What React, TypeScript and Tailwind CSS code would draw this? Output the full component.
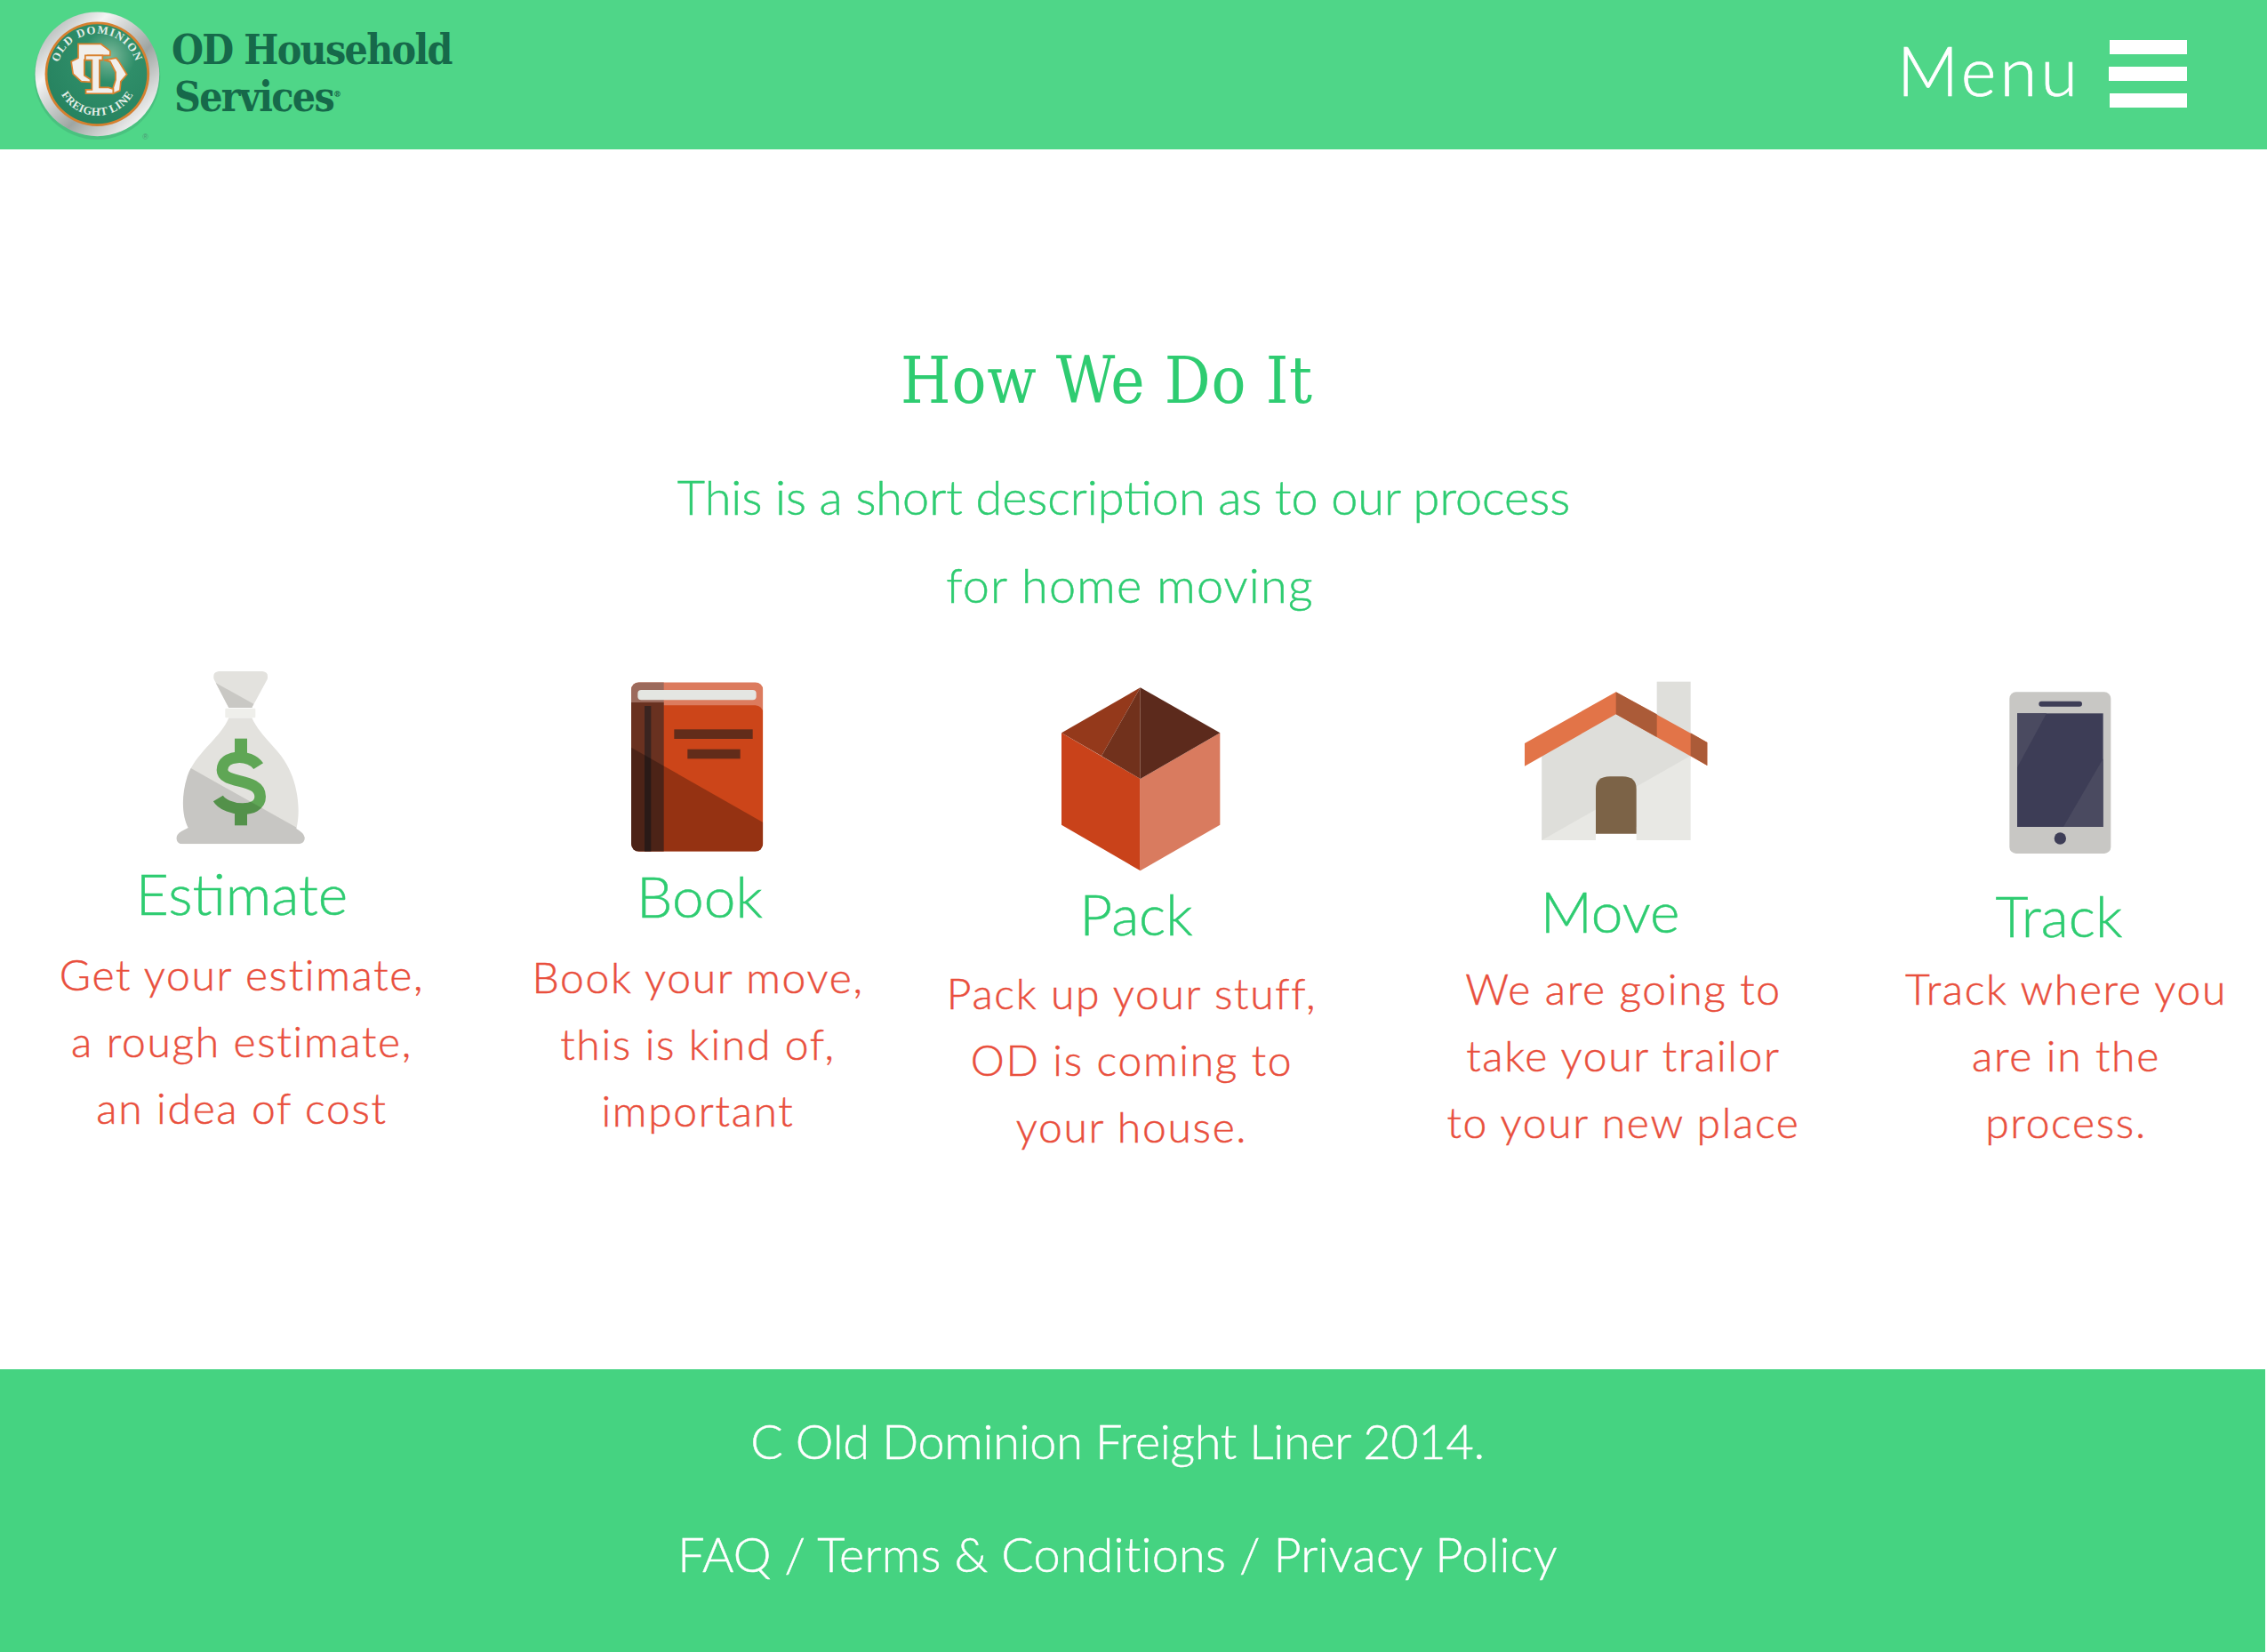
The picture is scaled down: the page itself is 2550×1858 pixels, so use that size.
import { ReactNode } from "react";

const gothic = "font-['Lato','Open_Sans',sans-serif] font-light";

function Logo() {
  return (
    <svg width="187" height="173" viewBox="0 0 168 156" className="-ml-[3px] mb-[8px] shrink-0">
      <defs>
        <linearGradient id="ring" x1="0" y1="0" x2="1" y2="1">
          <stop offset="0" stopColor="#8f9794" />
          <stop offset="0.3" stopColor="#f4f4f4" />
          <stop offset="0.6" stopColor="#9ea5a2" />
          <stop offset="0.85" stopColor="#eeeeee" />
          <stop offset="1" stopColor="#858c89" />
        </linearGradient>
        <radialGradient id="disc" cx="0.62" cy="0.32" r="0.75">
          <stop offset="0" stopColor="#7db99b" />
          <stop offset="0.35" stopColor="#2f8e69" />
          <stop offset="1" stopColor="#26825f" />
        </radialGradient>
        <path id="arcTop" d="M 60 80.5 A 41 41 0 0 1 142 80.5" />
        <path id="arcBottom" d="M 59 80.5 A 42 42 0 0 0 143 80.5" />
      </defs>
      <circle cx="101" cy="83" r="64" fill="#3f9f70" opacity="0.35" />
      <circle cx="101" cy="80.5" r="63" fill="url(#ring)" />
      <circle cx="101" cy="80.5" r="53" fill="#d5802f" />
      <circle cx="101" cy="80.5" r="50.5" fill="url(#disc)" />
      <text fill="#e6efe9" fontFamily="'Liberation Serif', serif" fontWeight="700" fontSize="11.5" letterSpacing="1.2">
        <textPath href="#arcTop" startOffset="50%" textAnchor="middle">OLD DOMINION</textPath>
      </text>
      <text fill="#e6efe9" fontFamily="'Liberation Serif', serif" fontWeight="700" fontSize="11.5" letterSpacing="0.4">
        <textPath href="#arcBottom" startOffset="50%" textAnchor="middle">FREIGHT LINE</textPath>
      </text>
      <g transform="translate(55.5 27.8) scale(0.3086)" stroke="#d9822f" strokeWidth="5" fill="#f1efec">
        <path d="M62 130 L85 118 L85 72 L160 72 L190 95 L190 110 L115 110 L105 125 L105 175 L125 188 L125 197 L95 195 L68 170 Z" />
        <path d="M170 125 L210 118 L218 128 L245 172 L225 195 L222 225 L200 235 L200 215 L208 190 L208 165 L190 130 Z" />
        <path d="M108 110 L165 110 L165 125 L155 125 L155 215 L185 215 L200 220 L200 235 L110 235 L110 222 L130 222 L130 125 L108 125 Z" />
      </g>
      <text x="147" y="147" fontSize="8" fill="#4d9a76" fontFamily="'Liberation Sans', sans-serif">®</text>
    </svg>
  );
}

function BagIcon() {
  return (
    <svg width="200" height="220" viewBox="0 0 600 660">
      <defs>
        <clipPath id="bagBody">
          <path d="M262 202 C 235 270 150 320 122 400 C 100 470 105 535 125 573 L 102 585 Q 85 595 85 610 Q 88 628 106 628 L 498 628 Q 520 625 518 605 Q 515 590 490 576 C 505 520 495 440 470 385 C 440 310 370 270 340 202 Z" />
        </clipPath>
      </defs>
      <path d="M228 45 L376 45 Q 398 48 392 72 L340 168 L262 168 L212 72 Q 206 48 228 45 Z" fill="#e3e2de" />
      <path d="M218 84 L346 155 L340 168 L262 168 Z" fill="#c9c8c4" />
      <rect x="250" y="170" width="102" height="32" rx="3" fill="#efefeb" />
      <rect x="60" y="190" width="480" height="450" fill="#e3e2de" clipPath="url(#bagBody)" />
      <path
        d="M362 365 C 335 322 240 325 240 378 C 240 428 368 402 368 468 C 368 528 250 515 226 474"
        fill="none"
        stroke="#5fa655"
        strokeWidth="38"
      />
      <rect x="282" y="272" width="42" height="52" fill="#5fa655" />
      <rect x="282" y="512" width="42" height="53" fill="#5fa655" />
      <polygon points="60,330 540,600 540,640 60,640" fill="#000" opacity="0.12" clipPath="url(#bagBody)" />
    </svg>
  );
}

function BookIcon() {
  return (
    <svg width="200" height="220" viewBox="0 0 600 660">
      <defs>
        <clipPath id="bookClip">
          <rect x="60" y="52" width="445" height="571" rx="26" />
        </clipPath>
      </defs>
      <g clipPath="url(#bookClip)">
        <rect x="60" y="52" width="445" height="100" fill="#dc7b5e" />
        <rect x="60" y="52" width="110" height="100" fill="#9c6a5c" />
        <rect x="60" y="130" width="445" height="493" rx="26" fill="#cc4519" />
        <rect x="60" y="120" width="110" height="503" fill="#693120" />
        <rect x="105" y="132" width="22" height="491" fill="#3a2420" />
        <polygon points="60,272 505,525 505,623 60,623" fill="#000" opacity="0.27" />
      </g>
      <rect x="82" y="78" width="400" height="34" rx="12" fill="#e4e6e2" />
      <rect x="205" y="211" width="265" height="32" fill="#622c1a" />
      <rect x="250" y="278" width="178" height="32" fill="#622c1a" />
    </svg>
  );
}

function BoxIcon() {
  return (
    <svg width="220" height="230" viewBox="0 0 660 690">
      <polygon points="72,193 338,348 338,658 72,503" fill="#c9421a" />
      <polygon points="338,348 607,193 607,503 338,658" fill="#d97b5f" />
      <polygon points="338,40 72,193 207,271" fill="#94391b" />
      <polygon points="338,40 207,271 338,348" fill="#71311c" />
      <polygon points="338,40 607,193 338,348" fill="#5c2a1c" />
    </svg>
  );
}

function HouseIcon() {
  return (
    <svg width="240" height="210" viewBox="0 0 720 630">
      <rect x="518" y="50" width="114" height="260" fill="#dfdfdb" />
      <polygon points="130,300 380,150 632,300 632,585 130,585" fill="#e8e8e4" />
      <polygon points="130,300 380,150 632,300 130,585" fill="#dededa" />
      <rect x="312" y="540" width="137" height="45" fill="#fff" />
      <path d="M312 563 L312 412 Q 312 370 360 370 L 402 370 Q 449 370 449 412 L449 563 Z" fill="#7c6347" />
      <polygon points="72,258 380,85 688,255 688,333 380,160 72,335" fill="#e27448" />
      <polygon points="380,85 518,160 518,237 380,160" fill="#ab5b38" />
      <polygon points="632,223 688,255 688,333 632,300" fill="#ab5b38" />
    </svg>
  );
}

function PhoneIcon() {
  return (
    <svg width="170" height="210" viewBox="0 0 510 630">
      <rect x="88" y="55" width="342" height="545" rx="22" fill="#c8c7c4" />
      <rect x="187" y="86" width="146" height="18" rx="9" fill="#3e3e57" />
      <rect x="114" y="127" width="290" height="383" fill="#3d3d56" />
      <polygon points="114,127 213,127 114,310" fill="#4a4a60" />
      <polygon points="404,280 404,510 270,510" fill="#4a4a60" />
      <circle cx="259" cy="549" r="20" fill="#3e3e57" />
    </svg>
  );
}

interface Step {
  icon: ReactNode;
  title: string;
  lines: string[];
  col: string;
  iconClass: string;
  titleClass: string;
  textClass: string;
}

const steps: Step[] = [
  {
    icon: <BagIcon />,
    title: "Estimate",
    lines: ["Get your estimate,", "a rough estimate,", "an idea of cost"],
    col: "w-[544px] pt-[33px]",
    iconClass: "-ml-[4px]",
    titleClass: "mt-[10px]",
    textClass: "mt-[18px]",
  },
  {
    icon: <BookIcon />,
    title: "Book",
    lines: ["Book your move,", "this is kind of,", "important"],
    col: "w-[482px] pt-[43px]",
    iconClass: "ml-[10px]",
    titleClass: "mt-[3px] ml-[4px]",
    textClass: "mt-[18px]",
  },
  {
    icon: <BoxIcon />,
    title: "Pack",
    lines: ["Pack up your stuff,", "OD is coming to", "your house."],
    col: "w-[504px] pt-[53px]",
    iconClass: "ml-[4px]",
    titleClass: "mt-[3px]",
    textClass: "mt-[16px] -ml-[10px]",
  },
  {
    icon: <HouseIcon />,
    title: "Move",
    lines: ["We are going to", "take your trailor", "to your new place"],
    col: "w-[562px] pt-[43px]",
    iconClass: "",
    titleClass: "mt-[30px]",
    textClass: "mt-[14px] ml-[30px]",
  },
  {
    icon: <PhoneIcon />,
    title: "Track",
    lines: ["Track where you", "are in the", "process."],
    col: "w-[448px] pt-[53px]",
    iconClass: "",
    titleClass: "mt-[25px]",
    textClass: "mt-[9px] ml-[16px]",
  },
];

export default function App() {
  return (
    <div className={`w-full min-h-[1858px] bg-white ${gothic}`}>
      <header className="flex h-[168px] items-center justify-between bg-[#4fd688] pr-[90px]">
        <div className="flex items-center">
          <Logo />
          <div className="ml-[9px] pb-[2px] font-['DejaVu_Serif',serif] [font-stretch:condensed] text-[46px] font-bold leading-[49px] tracking-[-1.7px] text-[#16694a]">
            <div>OD Household</div>
            <div className="ml-[3px]">
              Services<span className="align-super text-[10px] tracking-normal">®</span>
            </div>
          </div>
        </div>
        <button className="flex items-center gap-[32px] pb-[2px]">
          <span className="pb-[8px] text-[76px] leading-none tracking-[4px] text-white [-webkit-text-stroke-width:0.7px]">
            Menu
          </span>
          <span className="flex w-[87px] flex-col gap-[14px]">
            <span className="h-[16px] bg-white" />
            <span className="h-[16px] -ml-px bg-white" />
            <span className="h-[16px] bg-white" />
          </span>
        </button>
      </header>

      <main className="h-[1372px] pt-[220px]">
        <h1 className="-ml-[60px] text-center font-['DejaVu_Serif',serif] [font-stretch:condensed] text-[72px] font-normal leading-[80px] tracking-[0.8px] text-[#2ecc71]">
          How We Do It
        </h1>
        <div className="mt-[41px] text-center text-[54px] leading-[99px] text-[#2ecc71] [-webkit-text-stroke-width:0.5px]">
          <p className="-ml-[22px]">This is a short description as to our process</p>
          <p className="-ml-[8px] tracking-[1.2px]">for home moving</p>
        </div>
        <div className="flex">
          {steps.map((s) => (
            <section key={s.title} className={`flex flex-col items-center ${s.col}`}>
              <div className={s.iconClass}>{s.icon}</div>
              <h2 className={`text-[64px] font-light leading-[70px] text-[#2ecc71] [-webkit-text-stroke-width:0.5px] ${s.titleClass}`}>
                {s.title}
              </h2>
              <div className={`text-center text-[48px] leading-[75px] tracking-[1.7px] text-[#e94f3d] [-webkit-text-stroke-width:0.5px] ${s.textClass}`}>
                {s.lines.map((l) => (
                  <p key={l}>{l}</p>
                ))}
              </div>
            </section>
          ))}
        </div>
      </main>

      <footer className="mr-[2px] h-[318px] bg-[#45d381] pt-[46px] text-center text-[54px] leading-[70px] text-white [-webkit-text-stroke-width:0.5px]">
        <p className="-ml-[34px] tracking-[-0.3px]">C Old Dominion Freight Liner 2014.</p>
        <p className="mt-[57px] -ml-[34px] tracking-[0.2px]">FAQ / Terms &amp; Conditions / Privacy Policy</p>
      </footer>
    </div>
  );
}
